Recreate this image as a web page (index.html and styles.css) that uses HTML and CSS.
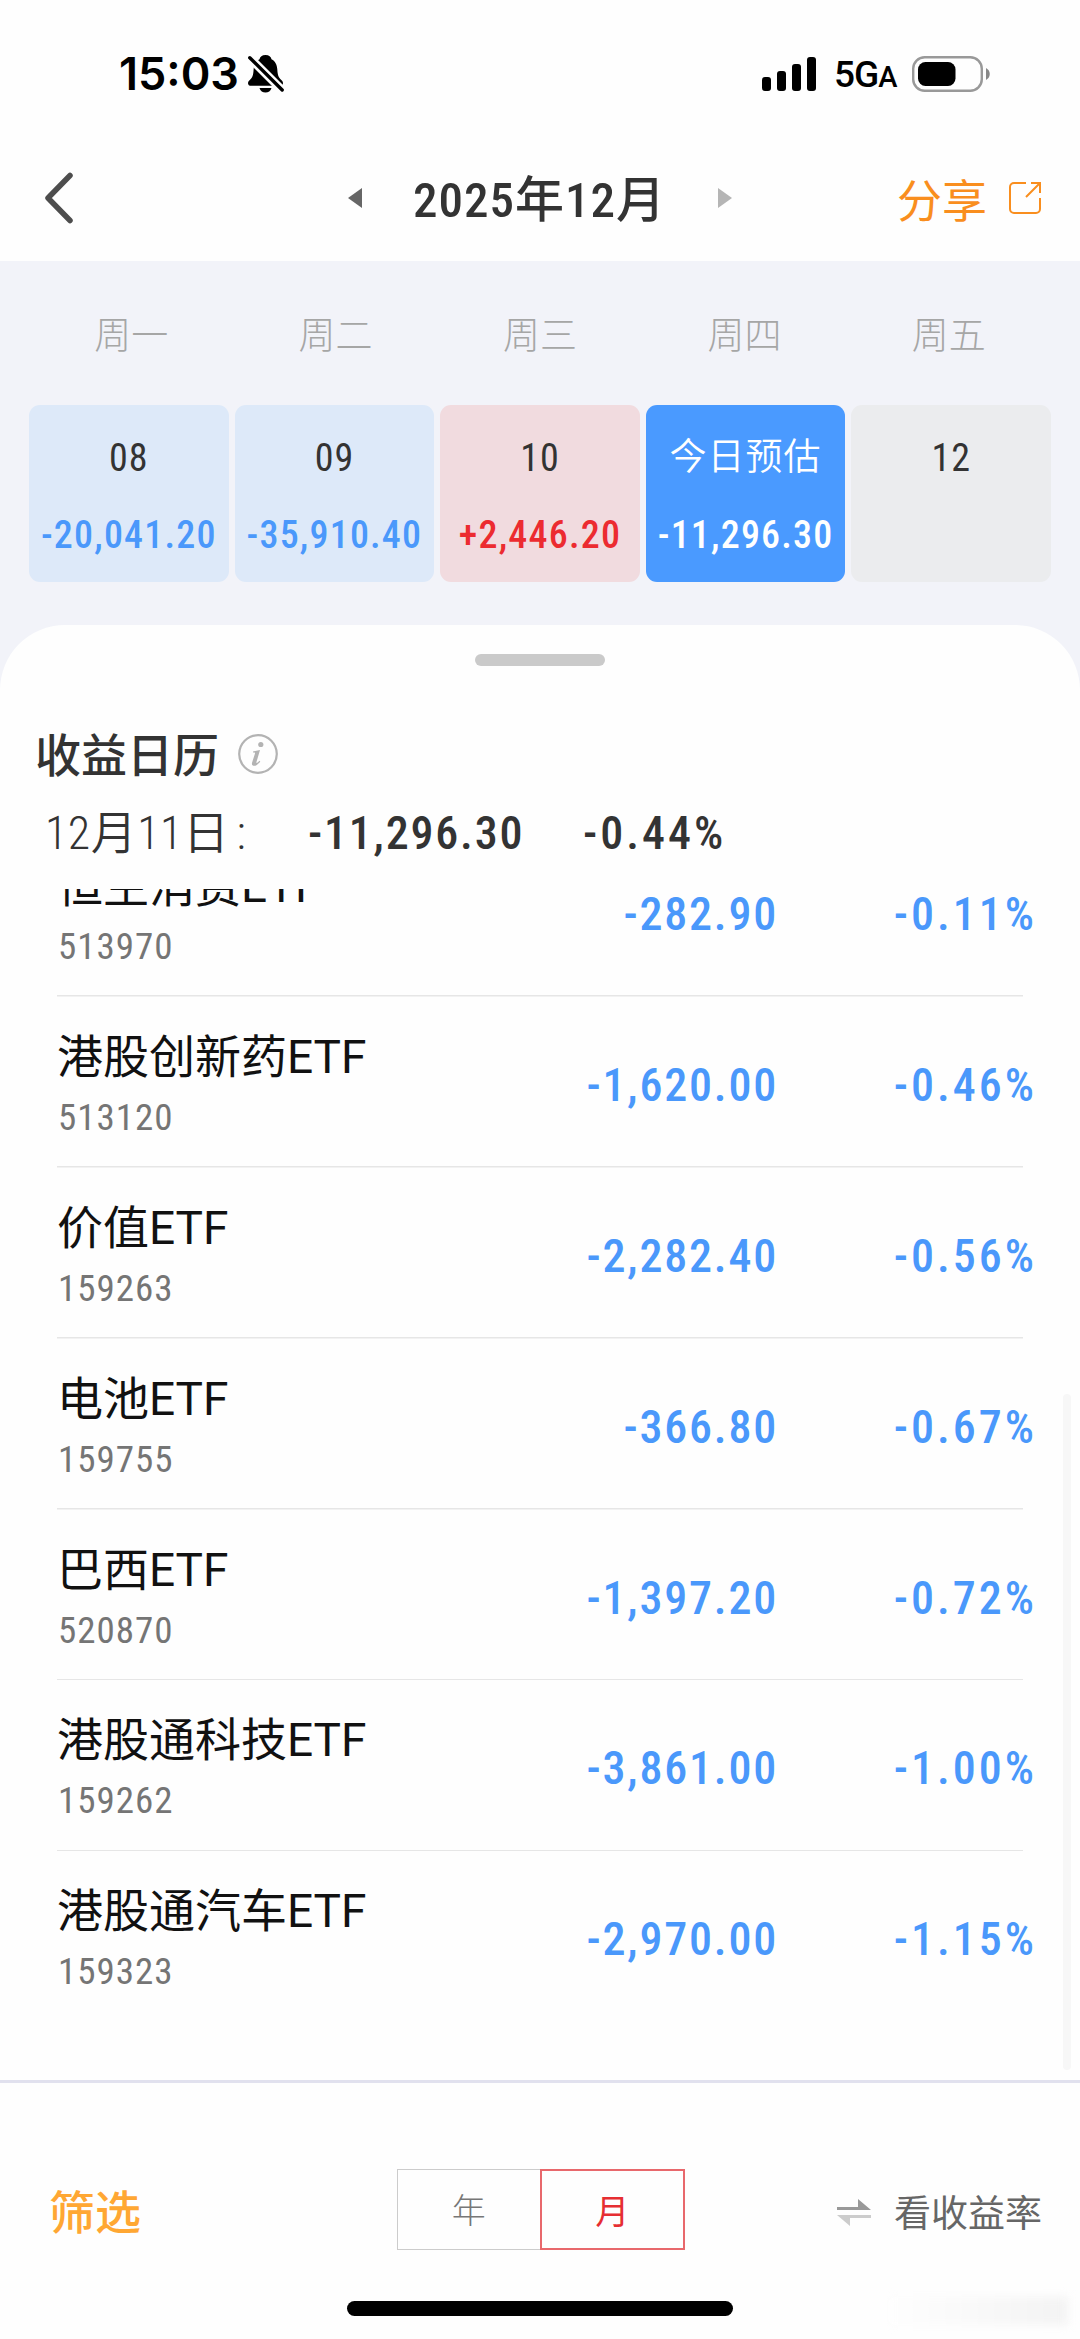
FILE: index.html
```html
<!DOCTYPE html>
<html lang="zh-CN">
  <head>
    <meta charset="UTF-8" />
    <meta name="viewport" content="width=device-width, initial-scale=1.0" />
    <title>收益日历</title>
    <link rel="stylesheet" href="styles.css">
  </head>
  <body>
    <div class="status-bar">
      <div class="status-left">
        <span class="time">15:03</span>
        <svg class="bell" width="36" height="38" viewBox="0 0 36 38">
          <path d="M17.500 0c3.500 0 5.500 2 6 4.200 4 2 5.500 5.600 5.800 10.300.3 5.500 1.200 8 4 10.600 1.200 1.100 1.700 2 1.700 3.100 0 1.600-1.200 2.600-3 2.600H3.200C1.300 30.800 0 29.800 0 28.200c0-1.200.6-2.200 1.800-3.300C4.700 22.300 5.300 20 5.600 14.500 5.900 9.800 7.500 6.200 11.500 4.200 12 2 14 0 17.500 0z" />
          <path d="M11.500 33h12c-.8 3-3.200 4.600-6 4.600s-5.200-1.600-6-4.600z" />
          <path d="M-1 0l38 38" stroke="#fefefe" stroke-width="8.500" />
          <path d="M1.800 2.800l32.400 32.200" stroke="#000" stroke-width="3.400" stroke-linecap="round" />
        </svg>
      </div>
      <div class="status-right">
        <svg width="54" height="34" viewBox="0 0 54 34">
          <rect x="0" y="20" width="9" height="14" rx="3" />
          <rect x="15" y="14" width="9" height="20" rx="3" />
          <rect x="30" y="7" width="9" height="27" rx="3" />
          <rect x="45" y="0" width="9" height="34" rx="3" />
        </svg>
        <span class="network">5G<small>A</small></span>
        <svg width="79" height="36" viewBox="0 0 79 36">
          <rect x="1.200" y="1.200" width="68.600" height="33.600" rx="11.500" fill="none" stroke="#999" stroke-width="2.400" />
          <rect x="6" y="6" width="37.500" height="24" rx="7.500" />
          <path d="M74 12c5 2.500 5 9.500 0 12z" fill="#888" />
        </svg>
      </div>
    </div>

    <div class="nav-bar">
      <svg class="back" width="30" height="52" viewBox="0 0 30 52">
        <path d="M26 3.500L4 26l22 22.500" fill="none" stroke="#4d4d4d" stroke-width="5.500" stroke-linecap="round" stroke-linejoin="round" />
      </svg>
      <div class="month">
        <svg width="14" height="20" viewBox="0 0 14 20"><path d="M14 0v20L0 10z" fill="#666" /></svg>
        <h1>2025年12月</h1>
        <svg width="14" height="20" viewBox="0 0 14 20"><path d="M0 0v20l14-10z" fill="#b5b5b5" /></svg>
      </div>
      <div class="share">
        <span>分享</span>
        <svg width="32" height="32" viewBox="0 0 32 32" fill="none" stroke="#f98e1e" stroke-width="2">
          <path d="M17 1H5a4 4 0 0 0-4 4v22a4 4 0 0 0 4 4h22a4 4 0 0 0 4-4V16M22 1h9v10M31 1L17 15" />
        </svg>
      </div>
    </div>

    <div class="calendar">
      <div class="weekdays">
        <span>周一</span>
        <span>周二</span>
        <span>周三</span>
        <span>周四</span>
        <span>周五</span>
      </div>
      <div class="days">
        <div class="day loss"><span class="date">08</span><span class="amount">-20,041.20</span></div>
        <div class="day loss"><span class="date">09</span><span class="amount">-35,910.40</span></div>
        <div class="day gain"><span class="date">10</span><span class="amount">+2,446.20</span></div>
        <div class="day today"><span class="date">今日预估</span><span class="amount">-11,296.30</span></div>
        <div class="day"><span class="date">12</span></div>
      </div>
    </div>

    <div class="sheet">
      <div class="handle"></div>
      <div class="sheet-title">
        <h2>收益日历</h2>
        <svg width="40" height="40" viewBox="0 0 40 40">
          <circle cx="20" cy="20" r="18.800" fill="none" stroke="#b3b3b3" stroke-width="2.200" />
          <circle cx="22.800" cy="10.500" r="2.600" fill="#b3b3b3" />
          <path d="M15 17.500l7-1.500-3.600 12.200c-.3 1.200.8 1 3-1.500l.9.700c-2.500 3.500-4.300 4.400-6 4.400-2 0-2.800-1.300-2.200-3.300L17 19.500c.2-1-.5-1-2-1z" fill="#b3b3b3" />
        </svg>
      </div>
      <div class="summary">
        <span class="summary-date">12月11日<i>:</i></span>
        <span class="summary-amount">-11,296.30</span>
        <span class="summary-rate">-0.44%</span>
      </div>

      <div class="list">
        <div class="row">
          <div><div class="name">恒生消费ETF</div><div class="code">513970</div></div>
          <span class="profit">-282.90</span><span class="rate">-0.11%</span>
        </div>
        <div class="row">
          <div><div class="name">港股创新药ETF</div><div class="code">513120</div></div>
          <span class="profit">-1,620.00</span><span class="rate">-0.46%</span>
        </div>
        <div class="row">
          <div><div class="name">价值ETF</div><div class="code">159263</div></div>
          <span class="profit">-2,282.40</span><span class="rate">-0.56%</span>
        </div>
        <div class="row">
          <div><div class="name">电池ETF</div><div class="code">159755</div></div>
          <span class="profit">-366.80</span><span class="rate">-0.67%</span>
        </div>
        <div class="row">
          <div><div class="name">巴西ETF</div><div class="code">520870</div></div>
          <span class="profit">-1,397.20</span><span class="rate">-0.72%</span>
        </div>
        <div class="row">
          <div><div class="name">港股通科技ETF</div><div class="code">159262</div></div>
          <span class="profit">-3,861.00</span><span class="rate">-1.00%</span>
        </div>
        <div class="row">
          <div><div class="name">港股通汽车ETF</div><div class="code">159323</div></div>
          <span class="profit">-2,970.00</span><span class="rate">-1.15%</span>
        </div>
        <div class="scrollbar"></div>
      </div>
    </div>

    <div class="toolbar">
      <span class="filter">筛选</span>
      <div class="tabs">
        <span class="tab">年</span>
        <span class="tab active">月</span>
      </div>
      <div class="switch">
        <svg width="34" height="27" viewBox="0 0 34 27">
          <path d="M0 8h21V0l13 11H0z" fill="#999" />
          <path d="M34 16v3H13v8L0 16z" fill="#ccc" />
        </svg>
        <span>看收益率</span>
      </div>
      <div class="home-indicator"></div>
      <div class="smudge"></div>
    </div>
  </body>
</html>
```
FILE: styles.css
```css
* {
  box-sizing: border-box;
}

body {
  margin: 0;
  width: 1080px;
  height: 2339px;
  overflow: hidden;
  display: flex;
  flex-direction: column;
  background: #fefefe;
  color: #333;
  font-family: Roboto, "Noto Sans CJK SC", sans-serif;
}

svg {
  display: block;
  flex-shrink: 0;
}

h1,
h2 {
  margin: 0;
  font-weight: 500;
}

.status-bar {
  height: 135px;
  padding: 12px 89px 0 119px;
  display: flex;
  justify-content: space-between;
  align-items: center;
  color: #000;
  font-family: Inter, sans-serif;
  font-weight: 600;
}

.status-left,
.status-right {
  display: flex;
  align-items: center;
}

.time {
  font-size: 45px;
  width: 129px;
}

.network {
  width: 78px;
  margin-left: 18px;
  padding-top: 2px;
  font-family: Roboto, sans-serif;
  font-size: 37px;
  font-weight: 500;
  letter-spacing: -1px;
  white-space: nowrap;
}

.network small {
  font-size: 29px;
}

.nav-bar {
  height: 126px;
  padding: 0 39px 0 44px;
  display: grid;
  grid-template-columns: 200px 1fr 200px;
  align-items: center;
}

.month {
  display: flex;
  justify-content: center;
  align-items: center;
  margin-left: -6px;
}

.month h1 {
  width: 356px;
  padding-top: 5px;
  text-align: center;
  font-size: 49px;
  line-height: 60px;
  font-stretch: 85%;
  letter-spacing: 1px;
}

.share {
  display: flex;
  justify-content: flex-end;
  align-items: center;
  gap: 22px;
  font-size: 45px;
  color: #f98e1e;
}

.calendar {
  height: 364px;
  padding: 42px 29px 0;
  background: #f2f3f9;
}

.weekdays {
  display: grid;
  grid-template-columns: repeat(5, 1fr);
  height: 102px;
  line-height: 68px;
  text-align: center;
  font-size: 37px;
  font-weight: 300;
  color: #a6a6a6;
}

.days {
  display: grid;
  grid-template-columns: repeat(5, 1fr);
  gap: 6px;
}

.day {
  height: 177px;
  padding-top: 27px;
  border-radius: 11px;
  background: #ebecee;
  text-align: center;
}

.date,
.amount {
  display: block;
  font-size: 38px;
  line-height: 52px;
  font-stretch: 85%;
}

.date {
  font-weight: 400;
  letter-spacing: 1px;
}

.today .date {
  font-size: 37px;
  font-weight: 350;
}

.amount {
  margin-top: 25px;
  font-weight: 500;
  letter-spacing: 1.2px;
}

.day.loss {
  background: #dde9f9;
}

.day.loss .amount {
  color: #4a98fb;
}

.day.gain {
  background: #f1dbdf;
}

.day.gain .amount {
  color: #ec2b30;
}

.day.today {
  background: #4a9aff;
  color: #fff;
}

.sheet {
  height: 1455px;
  background: #fefefe;
  border-radius: 65px 65px 0 0;
  box-shadow: 0 -70px 0 70px #f2f3f9;
  clip-path: inset(0);
  display: flex;
  flex-direction: column;
}

.handle {
  width: 130px;
  height: 12px;
  margin: 29px auto 0;
  border-radius: 6px;
  background: #cacaca;
}

.sheet-title {
  display: flex;
  align-items: center;
  gap: 19px;
  margin-top: 56px;
  padding-left: 35px;
  height: 64px;
}

.sheet-title h2 {
  padding-top: 3px;
  font-size: 46px;
  line-height: 64px;
}

.summary {
  display: flex;
  height: 103px;
  padding-left: 45px;
  font-size: 46px;
  line-height: 94px;
  font-weight: 500;
  font-stretch: 85%;
  letter-spacing: 1.8px;
}

.summary-date {
  width: 263px;
  font-weight: 350;
  letter-spacing: 0.5px;
}

.summary-date i {
  font-style: normal;
  margin-left: 7px;
}

.summary-amount {
  width: 275px;
}

.summary-rate {
  letter-spacing: 3px;
}

.list {
  position: relative;
  flex: 1;
  overflow: hidden;
  padding: 0 57px;
}

.row {
  display: grid;
  grid-template-columns: 1fr 400px 259px;
  height: 170.9px;
  padding-top: 30px;
  margin-right: -14px;
  font-size: 46px;
  color: #4a98fb;
  background: linear-gradient(#e6e6e6, #e6e6e6) 0 100% / 966px 1.5px no-repeat;
}

.row:first-child {
  margin-top: -63px;
}

.row:nth-child(7) {
  background: none;
}

.name {
  font-size: 46px;
  line-height: 61px;
  color: #111;
  white-space: nowrap;
}

.code {
  padding-left: 1px;
  font-size: 37px;
  line-height: 59px;
  font-weight: 400;
  font-stretch: 85%;
  letter-spacing: 1px;
  color: #757575;
}

.profit,
.rate {
  font-weight: 500;
  font-stretch: 85%;
  letter-spacing: 1.8px;
  line-height: 116px;
  text-align: right;
}

.rate {
  letter-spacing: 3px;
}

.scrollbar {
  position: absolute;
  right: 9px;
  top: 505px;
  width: 8px;
  height: 676px;
  border-radius: 4px;
  background: #f7f7f7;
}

.toolbar {
  position: relative;
  flex: 1;
  padding: 86px 38px 0 49px;
  border-top: 3px solid #e1e1ee;
  display: grid;
  grid-template-columns: 348px 288px 1fr;
  align-items: start;
  line-height: 80px;
}

.filter {
  padding-top: 4px;
  font-size: 46px;
  font-weight: 500;
  color: #ffa733;
}

.tabs {
  display: flex;
}

.tab {
  flex: 1;
  height: 81px;
  border: 1.5px solid #ccc;
  border-right: 0;
  text-align: center;
  font-size: 34px;
  font-weight: 300;
  line-height: 83px;
  color: #777;
}

.tab.active {
  border: 2px solid #e8686c;
  font-weight: 400;
  color: #e62e32;
}

.switch {
  display: flex;
  justify-content: flex-end;
  align-items: center;
  gap: 23px;
  font-size: 37px;
  color: #666;
}

.switch span {
  padding-top: 6px;
}

.home-indicator {
  position: absolute;
  left: 347px;
  bottom: 23px;
  width: 386px;
  height: 15px;
  border-radius: 8px;
  background: #000;
}

.smudge {
  position: absolute;
  right: 12px;
  bottom: 14px;
  width: 180px;
  height: 28px;
  background: linear-gradient(90deg, #fefefe, #f3f3f3);
  filter: blur(4px);
}
```
